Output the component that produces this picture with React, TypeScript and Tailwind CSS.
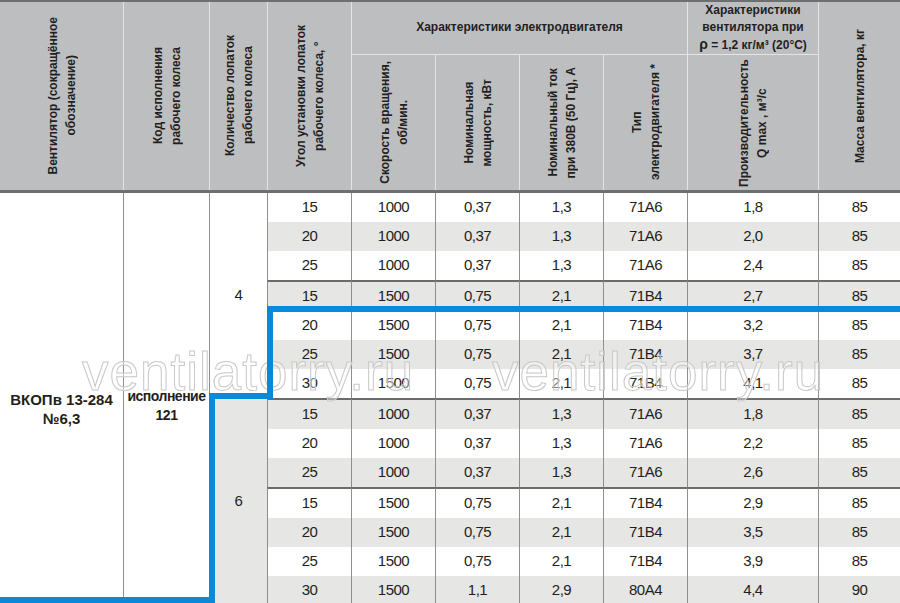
import React from "react";

const rows = [
  ["15", "1000", "0,37", "1,3", "71A6", "1,8", "85"],
  ["20", "1000", "0,37", "1,3", "71A6", "2,0", "85"],
  ["25", "1000", "0,37", "1,3", "71A6", "2,4", "85"],
  ["15", "1500", "0,75", "2,1", "71B4", "2,7", "85"],
  ["20", "1500", "0,75", "2,1", "71B4", "3,2", "85"],
  ["25", "1500", "0,75", "2,1", "71B4", "3,7", "85"],
  ["30", "1500", "0,75", "2,1", "71B4", "4,1", "85"],
  ["15", "1000", "0,37", "1,3", "71A6", "1,8", "85"],
  ["20", "1000", "0,37", "1,3", "71A6", "2,2", "85"],
  ["25", "1000", "0,37", "1,3", "71A6", "2,6", "85"],
  ["15", "1500", "0,75", "2,1", "71B4", "2,9", "85"],
  ["20", "1500", "0,75", "2,1", "71B4", "3,5", "85"],
  ["25", "1500", "0,75", "2,1", "71B4", "3,9", "85"],
  ["30", "1500", "1,1", "2,9", "80A4", "4,4", "90"],
];

// строки, над которыми идёт тёмный разделитель группы
const breaks = [3, 7, 10];

const cols = "grid grid-cols-[123px_86px_58px_84px_84px_84px_84px_84px_131px_82px]";

function VText({ lines }: { lines: string[] }) {
  return (
    <div className="rotate-180 whitespace-nowrap text-center leading-[18px] [writing-mode:vertical-rl]">
      {lines.map((l) => (
        <div key={l}>{l}</div>
      ))}
    </div>
  );
}

export default function App() {
  return (
    <div className="relative w-[900px] h-[603px] overflow-hidden bg-white font-['Liberation_Sans',Arial,sans-serif] text-[#231f20]">
      {/* Шапка */}
      <header
        className={`${cols} grid-rows-[53px_135px] border-t-2 border-b-[3px] border-[#6d6e70] bg-[#bdbec0] text-[12px] font-bold`}
      >
        <div className="row-span-2 flex items-center justify-center">
          <VText lines={["Вентилятор (сокращённое", "обозначение)"]} />
        </div>
        <div className="row-span-2 flex items-center justify-center border-l border-[#e4e4e4]">
          <VText lines={["Код исполнения", "рабочего колеса"]} />
        </div>
        <div className="row-span-2 flex items-center justify-center border-l border-[#e4e4e4]">
          <VText lines={["Количество лопаток", "рабочего колеса"]} />
        </div>
        <div className="row-span-2 flex items-center justify-center border-l border-[#e4e4e4]">
          <VText lines={["Угол установки лопаток", "рабочего колеса, °"]} />
        </div>
        <div className="col-span-4 flex items-center justify-center border-l border-b border-[#e4e4e4] pb-[2px]">
          Характеристики электродвигателя
        </div>
        <div className="flex flex-col items-center justify-center border-l border-b border-[#e4e4e4] text-center leading-[17px]">
          <div>Характеристики</div>
          <div>вентилятора при</div>
          <div>
            <span className="text-[14px]">ρ</span> = 1,2 кг/м³ (20°C)
          </div>
        </div>
        <div className="row-span-2 flex items-center justify-center border-l border-[#e4e4e4]">
          <VText lines={["Масса вентилятора, кг"]} />
        </div>
        <div className="flex items-center justify-center border-l border-[#e4e4e4]">
          <VText lines={["Скорость вращения,", "об/мин."]} />
        </div>
        <div className="flex items-center justify-center border-l border-[#e4e4e4]">
          <VText lines={["Номинальная", "мощность, кВт"]} />
        </div>
        <div className="flex items-center justify-center border-l border-[#e4e4e4]">
          <VText lines={["Номинальный ток", "при 380В (50 Гц), А"]} />
        </div>
        <div className="flex items-center justify-center border-l border-[#e4e4e4]">
          <VText lines={["Тип", "электродвигателя *"]} />
        </div>
        <div className="flex items-center justify-center border-l border-[#e4e4e4]">
          <VText lines={["Производительность", "Q max , м³/с"]} />
        </div>
      </header>

      {/* Тело таблицы */}
      <div className={`${cols} text-[15px] tracking-[-0.5px]`}>
        <div className="col-start-1 row-start-1 row-span-14 flex flex-col items-center justify-center pt-[20px] text-center font-bold leading-[19px] tracking-normal">
          <div>ВКОПв 13-284</div>
          <div>№6,3</div>
        </div>
        <div className="col-start-2 row-start-1 row-span-14 flex flex-col items-center justify-center border-l border-[#8f8f8f] pt-[14px] text-center text-[14px] font-bold leading-[19px]">
          <div>исполнение</div>
          <div>121</div>
        </div>
        <div className="col-start-3 row-start-1 row-span-7 flex items-center justify-center border-l border-[#8f8f8f] bg-white">
          4
        </div>
        <div className="col-start-3 row-start-8 row-span-7 flex items-center justify-center border-l border-[#8f8f8f] bg-[#e6e6e5]">
          6
        </div>
        {rows.map((r, i) =>
          r.map((v, j) => (
            <div
              key={`${i}-${j}`}
              className={`flex items-center justify-center border-l border-[#8f8f8f] ${
                i % 2 ? "bg-[#e6e6e5]" : "bg-white"
              } ${breaks.includes(i) ? "h-[31px] border-t-2 border-t-[#6b6b6b]" : "h-[29px]"}`}
            >
              {v}
            </div>
          ))
        )}
      </div>

      {/* Водяной знак */}
      <span className="pointer-events-none absolute left-[82px] top-[345px] text-[53px] leading-none tracking-[1px] text-white/40 [-webkit-text-stroke:1px_#c8c8c8]">
        ventilatorry.ru
      </span>
      <span className="pointer-events-none absolute left-[492px] top-[345px] text-[53px] leading-none tracking-[1px] text-white/40 [-webkit-text-stroke:1px_#c8c8c8]">
        ventilatorry.ru
      </span>

      {/* Синяя рамка выделения */}
      <svg className="pointer-events-none absolute left-0 top-0" width="900" height="603">
        <path
          d="M 900 309 H 270 V 396 H 212 V 600 H 0"
          fill="none"
          stroke="#0a89d9"
          strokeWidth="6"
          strokeLinejoin="miter"
        />
      </svg>
    </div>
  );
}
